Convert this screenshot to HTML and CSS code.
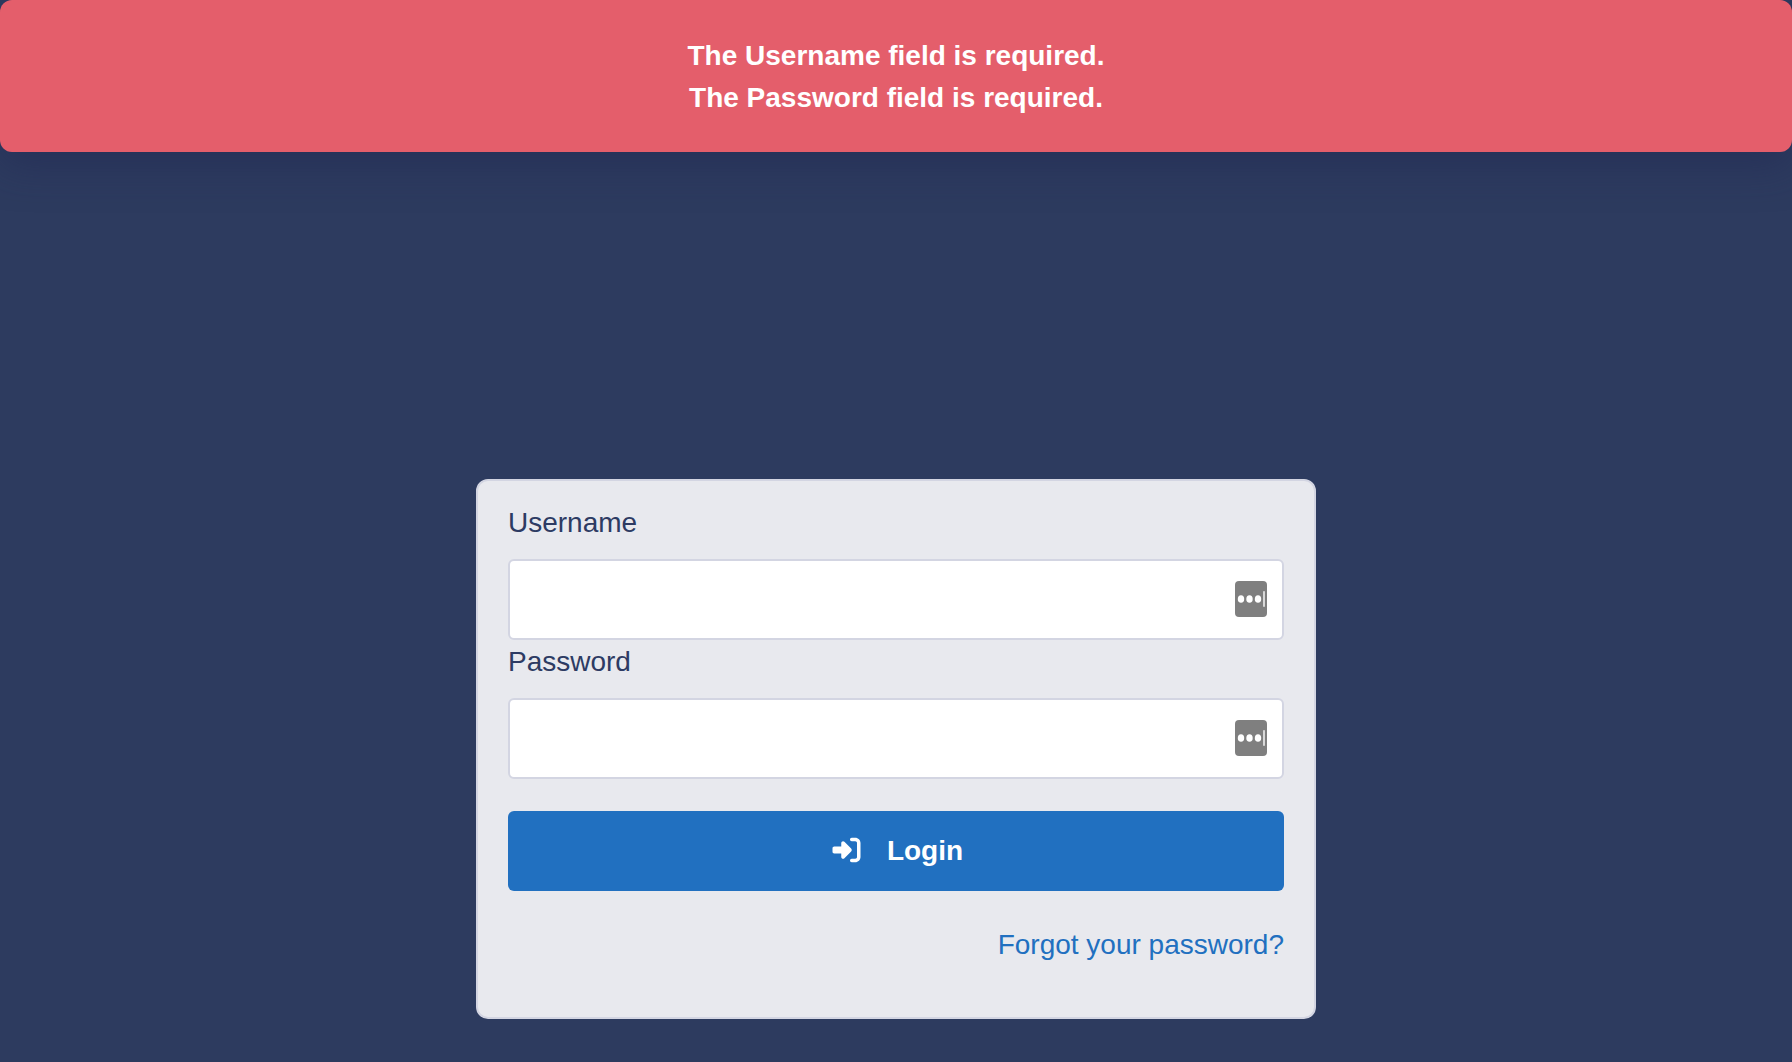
FILE: index.html
```html
<!DOCTYPE html>
<html lang="en">
<head>
<meta charset="utf-8">
<meta name="viewport" content="width=device-width, initial-scale=1">
<title>Login</title>
<link rel="stylesheet" href="styles.css">
</head>
<body>
<div class="alert" role="alert">
  <p>The Username field is required.</p>
  <p>The Password field is required.</p>
</div>
<main class="page">
  <form class="card">
    <label class="label" for="username">Username</label>
    <div class="field">
      <input class="input" id="username" name="username" type="text">
      <svg class="field-icon" viewBox="0 0 32 36" aria-hidden="true">
        <rect width="32" height="36" rx="4" fill="#7f7f7f"/>
        <g fill="#fff"><ellipse cx="6" cy="18" rx="3.2" ry="3.8"/><ellipse cx="14.5" cy="18" rx="3.2" ry="3.8"/><ellipse cx="23" cy="18" rx="3.2" ry="3.8"/><rect x="28.3" y="10" width="1.4" height="16" rx=".7"/></g>
      </svg>
    </div>
    <label class="label" for="password">Password</label>
    <div class="field">
      <input class="input" id="password" name="password" type="password">
      <svg class="field-icon" viewBox="0 0 32 36" aria-hidden="true">
        <rect width="32" height="36" rx="4" fill="#7f7f7f"/>
        <g fill="#fff"><ellipse cx="6" cy="18" rx="3.2" ry="3.8"/><ellipse cx="14.5" cy="18" rx="3.2" ry="3.8"/><ellipse cx="23" cy="18" rx="3.2" ry="3.8"/><rect x="28.3" y="10" width="1.4" height="16" rx=".7"/></g>
      </svg>
    </div>
    <button class="button" type="submit">
      <svg class="button-icon" viewBox="0 0 512 512" aria-hidden="true"><path fill="currentColor" d="M217.9 105.9L340.7 228.7c7.2 7.2 11.3 17.1 11.3 27.3s-4.1 20.1-11.3 27.3L217.9 406.1c-6.4 6.4-15 9.9-24 9.9c-18.7 0-33.9-15.2-33.9-33.9l0-62.1L32 320c-17.7 0-32-14.3-32-32l0-64c0-17.7 14.3-32 32-32l128 0 0-62.1c0-18.7 15.2-33.9 33.9-33.9c9 0 17.6 3.6 24 9.9zM352 416l64 0c17.7 0 32-14.3 32-32l0-256c0-17.7-14.3-32-32-32l-64 0c-17.7 0-32-14.3-32-32s14.3-32 32-32l64 0c53 0 96 43 96 96l0 256c0 53-43 96-96 96l-64 0c-17.7 0-32-14.3-32-32s14.3-32 32-32z"/></svg>
      <span>Login</span>
    </button>
    <a class="forgot" href="#">Forgot your password?</a>
  </form>
</main>
</body>
</html>
```
FILE: styles.css
```css
* {
  box-sizing: border-box;
}

body {
  display: flex;
  flex-direction: column;
  min-height: 100vh;
  margin: 0;
  background: #2d3b5f;
  color: #2d3b63;
  font: 28px/42px "Liberation Sans", Arial, sans-serif;
}

.alert {
  padding: 35px 34px 33px;
  border-radius: 12px;
  background: #e45e6b;
  box-shadow: 0 12px 40px rgba(31, 38, 81, 0.5);
  color: #fff;
  font-weight: 700;
  text-align: center;
}

.alert p {
  margin: 0;
}

.page {
  display: flex;
  flex: 1;
  flex-direction: column;
  align-items: center;
  justify-content: flex-end;
  padding: 43px 16px;
}

.card {
  display: flex;
  flex-direction: column;
  width: 100%;
  max-width: 840px;
  padding: 20px 30px 50px;
  border: 2px solid #d3d5e2;
  border-radius: 12px;
  background: #e8e9ee;
}

.label {
  align-self: flex-start;
  margin-bottom: 14px;
  line-height: 44px;
}

.field {
  position: relative;
}

.input {
  display: block;
  width: 100%;
  height: 81px;
  padding: 16px 64px 16px 20px;
  border: 2px solid #d3d5e2;
  border-radius: 6px;
  background: #fff;
  color: inherit;
  font: inherit;
}

.field-icon {
  position: absolute;
  top: 22px;
  right: 17px;
  width: 32px;
  height: 36px;
}

.button {
  display: flex;
  align-items: center;
  justify-content: center;
  gap: 23px;
  height: 80px;
  margin: 32px 0;
  border: 0;
  border-radius: 6px;
  background: #2170c0;
  color: #fff;
  font: inherit;
  font-weight: 700;
  cursor: pointer;
}

.button-icon {
  width: 35px;
  height: 28px;
  margin-bottom: 2px;
}

.forgot {
  align-self: flex-end;
  color: #2170c0;
  line-height: 44px;
  text-decoration: none;
}
```
